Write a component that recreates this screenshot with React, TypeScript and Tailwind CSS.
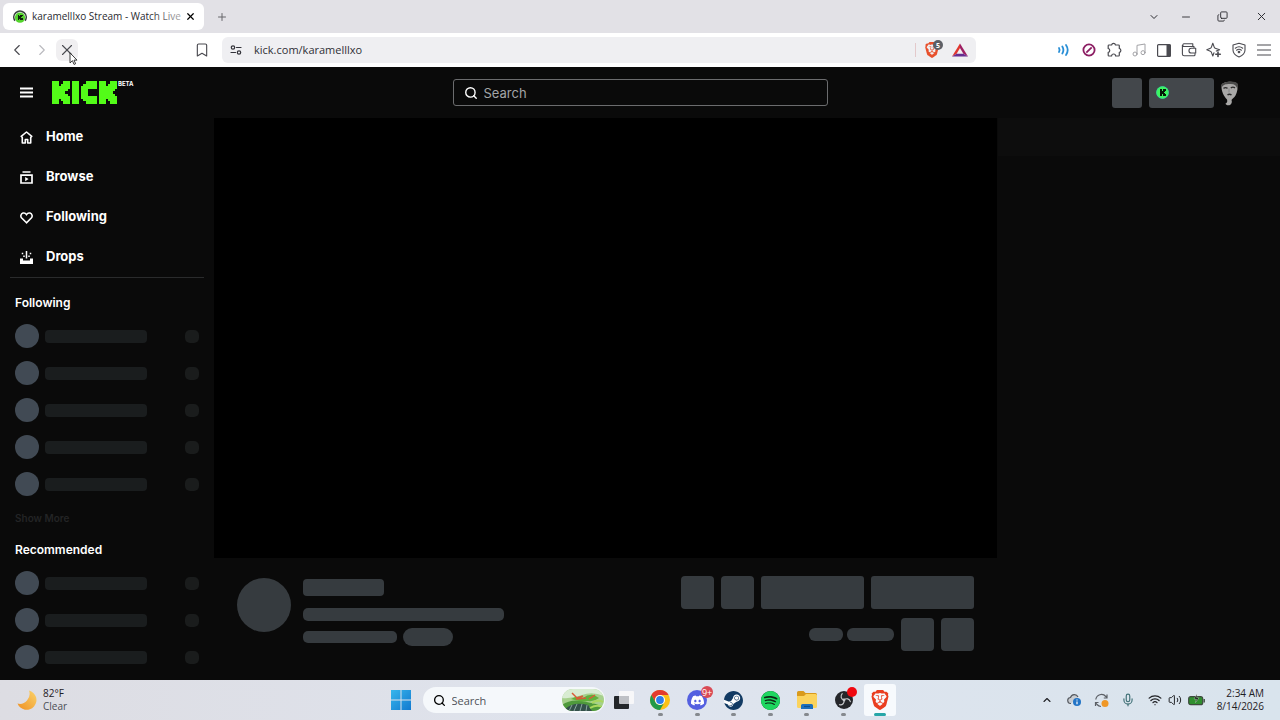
import type { ReactNode } from "react";
import {
  Bookmark,
  ChevronDown,
  ChevronLeft,
  ChevronRight,
  ChevronUp,
  Copy,
  Mic,
  Minus,
  Music,
  Plus,
  Search,
  Volume2,
  Wifi,
  X,
} from "lucide-react";
import { SiBrave, SiDiscord, SiSpotify, SiSteam } from "react-icons/si";

const SYSTEM_FONT = "font-['Open_Sans','Noto_Sans',sans-serif]";

type Block = [x: number, y: number, w: number, h: number];

const K_BLOCKS: Block[] = [
  [0, 0, 3, 9],
  [3, 2, 1, 5],
  [4, 1, 1, 7],
  [5, 0, 1, 3],
  [5, 3, 1, 3],
  [5, 6, 1, 3],
  [6, 0, 1, 4],
  [6, 5, 1, 4],
  [7, 0, 1, 3],
  [7, 6, 1, 3],
];
const I_BLOCKS: Block[] = [[0, 0, 3, 9]];
const C_BLOCKS: Block[] = [
  [0, 2, 1, 5],
  [1, 1, 1, 7],
  [2, 0, 1, 9],
  [3, 0, 4, 3],
  [3, 6, 4, 3],
];

function Blocks({ blocks, x = 0 }: { blocks: Block[]; x?: number }) {
  return (
    <g transform={`translate(${x} 0)`} shapeRendering="crispEdges">
      {blocks.map(([bx, by, w, h], i) => (
        <rect key={i} x={bx} y={by} width={w} height={h} />
      ))}
    </g>
  );
}

function KickLogo() {
  return (
    <svg viewBox="0 0 29 9" preserveAspectRatio="none" className="h-[23px] w-[65px] fill-[#53fc18]" aria-hidden="true">
      <Blocks blocks={K_BLOCKS} />
      <Blocks blocks={I_BLOCKS} x={9} />
      <Blocks blocks={C_BLOCKS} x={13} />
      <Blocks blocks={K_BLOCKS} x={21} />
    </svg>
  );
}

function Favicon() {
  return (
    <svg viewBox="0 0 26 26" className="size-[14px] shrink-0" aria-hidden="true">
      <circle cx="13" cy="14" r="9.5" fill="#53d42c" />
      <path d="M3.5 20A11.5 11.5 0 1 1 22.500 20" fill="none" stroke="#3b4440" strokeWidth="3" />
      <g transform="translate(8.500 8.500) scale(1.15)" fill="#10240d">
        <Blocks blocks={K_BLOCKS} />
      </g>
    </svg>
  );
}

/* ---------- Browser window ---------- */

function TabStrip() {
  return (
    <div className="flex h-[33px] shrink-0 items-center justify-between bg-[#e2e1e6] pl-[3px]">
      <div className="flex items-center">
        <div className="flex h-[27px] w-[201px] items-center rounded-md bg-white pr-2 pl-2.5">
          <Favicon />
          <span className="relative ml-[5px] text-[10px] whitespace-nowrap text-[#2a2a30]">
            karamelllxo Stream - Watch Live
            <span className="absolute inset-y-0 right-0 w-8 bg-linear-to-r from-transparent to-white/60" />
          </span>
          <button type="button" aria-label="Close tab" className="ml-auto">
            <X className="size-[11px] text-black" strokeWidth={2.6} />
          </button>
        </div>
        <button type="button" aria-label="New tab" className="ml-3">
          <Plus className="size-3 text-[#66666b]" strokeWidth={2} />
        </button>
      </div>
      <div className="flex items-center pr-3 text-[#2b2b30]">
        <button type="button" aria-label="Search tabs" className="mr-5">
          <ChevronDown className="size-3" strokeWidth={2} />
        </button>
        <button type="button" aria-label="Minimize" className="mr-[25px]">
          <Minus className="size-3" strokeWidth={1.8} />
        </button>
        <button type="button" aria-label="Restore" className="mr-[27px]">
          <Copy className="size-[11px] -scale-y-100" strokeWidth={2} />
        </button>
        <button type="button" aria-label="Close window">
          <X className="size-[13px]" strokeWidth={1.8} />
        </button>
      </div>
    </div>
  );
}

function TuneIcon() {
  return (
    <svg viewBox="0 0 12 12" className="size-3 text-[#33333a]" fill="none" stroke="currentColor" strokeWidth="1.2" strokeLinecap="round" aria-hidden="true">
      <circle cx="3" cy="3.500" r="1.700" />
      <path d="M6.500 3.500H11" />
      <circle cx="9" cy="8.500" r="1.700" />
      <path d="M1 8.500h4.500" />
    </svg>
  );
}

function PuzzleIcon() {
  return (
    <svg viewBox="0 0 16 16" className="size-4" fill="none" stroke="currentColor" strokeWidth="1.200" strokeLinejoin="round" aria-hidden="true">
      <path d="M3 3h2.600a2 2 0 0 1 3.900 0h3a.8.8 0 0 1 .8.800v2.700a2 2 0 0 1 0 3.900v2.800a.8.8 0 0 1-.8.800H9.600a2 2 0 0 0-4 0H3a.8.8 0 0 1-.8-.8v-2.800a2 2 0 0 0 0-3.900V3.800A.8.8 0 0 1 3 3z" />
    </svg>
  );
}

function SparkIcon() {
  return (
    <svg viewBox="0 0 16 16" className="size-4" fill="none" stroke="currentColor" strokeWidth="1.1" strokeLinejoin="round" strokeLinecap="round" aria-hidden="true">
      <path d="M6.800 1.200 8.300 5.400a1.500 1.500 0 0 0 .9.900L13.600 7.800 10.300 9.100M6.800 1.200 5.300 5.400a1.500 1.500 0 0 1-.9.900L.8 7.800l3.600 1.400a1.500 1.500 0 0 1 .9.900L6.800 14l1.200-3.300" />
      <path d="M12 10v4.500M9.800 12.200h4.500" strokeWidth="1.600" />
    </svg>
  );
}

function VpnIcon() {
  return (
    <svg viewBox="0 0 16 16" className="size-4" fill="none" stroke="currentColor" strokeWidth="1.100" strokeLinecap="round" strokeLinejoin="round" aria-hidden="true">
      <path d="M8 1.200 14 3v5c0 3.300-2.800 5.600-6 7-3.200-1.400-6-3.700-6-7V3z" />
      <path d="M4.300 6.200c2.300-1.800 5.100-1.800 7.400 0M5.600 8.200c1.500-1.200 3.300-1.200 4.800 0" />
      <circle cx="8" cy="10" r=".8" fill="currentColor" />
    </svg>
  );
}

function WavesIcon() {
  return (
    <svg viewBox="0 0 14 14" className="size-3.5" fill="none" stroke="#2a8fd6" strokeWidth="1.800" strokeLinecap="round" aria-hidden="true">
      <path d="M2 5q1.200 2 0 4M5.300 3.500q2.200 3.500 0 7M9 2q3.400 5 0 10" />
    </svg>
  );
}

function BlockedIcon() {
  return (
    <svg viewBox="0 0 14 14" className="size-3.5" fill="none" stroke="#8c1d63" strokeWidth="1.800" aria-hidden="true">
      <circle cx="7" cy="7" r="5.600" />
      <path d="M4.300 9.700l5.400-5.400" />
    </svg>
  );
}

function BatIcon() {
  return (
    <svg viewBox="0 0 16 14" className="h-[14px] w-4" aria-hidden="true">
      <path d="M8 .5 0 13.500 4.600 10.800 8 5z" fill="#e0362f" />
      <path d="M8 .5 16 13.500 11.400 10.800 8 5z" fill="#9e1f63" />
      <path d="M0 13.500h16l-4.600-2.700H4.600z" fill="#662d91" />
    </svg>
  );
}

function Slot({ label, children }: { label: string; children: ReactNode }) {
  return (
    <button type="button" aria-label={label} className="flex w-[25px] items-center justify-center">
      {children}
    </button>
  );
}

function Toolbar() {
  return (
    <div className="flex h-[34px] shrink-0 items-center bg-white text-[#4a4a50]">
      <div className="flex w-[222px] shrink-0 items-center pr-3 pl-2">
        <button type="button" aria-label="Back">
          <ChevronLeft className="size-[18px]" strokeWidth={1.5} />
        </button>
        <button type="button" aria-label="Forward" className="ml-[7px]">
          <ChevronRight className="size-[18px] text-[#b9b9be]" strokeWidth={1.500} />
        </button>
        <button type="button" aria-label="Stop loading" className="relative ml-[5px] flex size-[22px] items-center justify-center rounded-md bg-[#f0eff1]">
          <X className="size-[18px]" strokeWidth={1.500} />
          <svg viewBox="0 0 10 16" className="absolute top-[13px] left-[13px] h-[14px] w-[9px]" aria-hidden="true">
            <path d="M1 1v11.500l2.800-2.600 1.800 4.300 1.800-.8-1.800-4.100H9z" fill="#fff" stroke="#222" strokeWidth="1" />
          </svg>
        </button>
        <button type="button" aria-label="Bookmark this page" className="ml-auto">
          <Bookmark className="size-4" strokeWidth={1.700} />
        </button>
      </div>
      <div className="flex h-[26px] min-w-0 flex-1 items-center rounded-md bg-[#efeff2] pr-2 pl-2">
        <TuneIcon />
        <input
          aria-label="Address"
          defaultValue="kick.com/karamelllxo"
          className="ml-3 min-w-0 flex-1 bg-transparent text-[11px] leading-4 text-[#2f2f36] outline-none"
        />
        <span className="h-[14px] w-px bg-[#e3c9cb]" />
        <button type="button" aria-label="Shields" className="relative ml-2">
          <SiBrave className="size-4 text-[#e8502c]" />
          <span className="absolute -top-[2px] -right-[3px] flex size-[10px] items-center justify-center rounded-full bg-[#5d6066] text-[7px] leading-none font-bold text-white">
            5
          </span>
        </button>
        <button type="button" aria-label="Rewards" className="ml-3">
          <BatIcon />
        </button>
      </div>
      <div className="flex w-[304px] shrink-0 justify-end pr-1">
        <Slot label="Audio"><WavesIcon /></Slot>
        <Slot label="Blocker"><BlockedIcon /></Slot>
        <Slot label="Extensions"><PuzzleIcon /></Slot>
        <Slot label="Media"><Music className="size-4 text-[#a2a2a6]" strokeWidth={1.500} /></Slot>
        <Slot label="Sidebar">
          <svg viewBox="0 0 14 13" className="h-[13px] w-[14px]" aria-hidden="true">
            <rect x=".6" y=".6" width="12.800" height="11.800" rx="1" fill="none" stroke="currentColor" strokeWidth="1.200" />
            <rect x="9.500" y=".6" width="4" height="11.800" fill="currentColor" />
          </svg>
        </Slot>
        <Slot label="Wallet">
          <svg viewBox="0 0 16 14" className="h-[14px] w-4" fill="none" stroke="currentColor" strokeWidth="1.100" strokeLinejoin="round" aria-hidden="true">
            <path d="M13 5V3.500H2.800a1.400 1.400 0 0 1 0-2.700h9v2.700M1.400 2v9a1.800 1.800 0 0 0 1.800 1.800H13a1 1 0 0 0 1-1v-1.600" />
            <path d="M14.700 5.300v4.700h-4.400a2.300 2.300 0 0 1 0-4.700z" />
          </svg>
        </Slot>
        <Slot label="Assistant"><SparkIcon /></Slot>
        <Slot label="VPN"><VpnIcon /></Slot>
        <Slot label="Menu">
          <svg viewBox="0 0 14 12" className="h-3 w-[14px]" stroke="currentColor" strokeWidth="1.200" aria-hidden="true">
            <path d="M0 1h14M0 6h14M0 11h14" />
          </svg>
        </Slot>
      </div>
    </div>
  );
}

/* ---------- Site ---------- */

function Portrait() {
  return (
    <svg viewBox="0 0 26 26" className="size-[26px]" aria-hidden="true">
      <path d="M3.500 5C5 1.500 17 .5 19 4c1.300 3.500.3 8-1.500 11.500-1.300 2-3 3.300-4 4.500.8 1.500.3 4-1.500 5-2 .8-4.300 0-4.500-1.500 1.500-.5 2.200-2 1.500-4C6 16.500 3 11 3.500 5z" fill="#a9a8a7" />
      <path d="M3 6C3.500 1 18 0 20 4l-.5 5C18.500 5.500 16 3.500 11.500 4 7.500 4 5 4.500 3.500 8z" fill="#4c4c4b" />
      <path d="M5.500 8.300q2-1.300 4 0M12.800 7.800q2.200-1.300 4.200 0M9.500 14.800q1.800-1.200 4 0" stroke="#2c2c2c" strokeWidth="1.400" fill="none" />
      <path d="M11 8.500v4" stroke="#868686" />
    </svg>
  );
}

function SiteHeader() {
  return (
    <header className="grid h-[50px] shrink-0 grid-cols-[1fr_auto_1fr] items-center pt-px">
      <div className="flex items-center pl-5">
        <button type="button" aria-label="Toggle sidebar">
          <svg viewBox="0 0 13 11" className="h-[11px] w-[13px]" stroke="#fff" strokeWidth="2" aria-hidden="true">
            <path d="M0 1.500h13M0 5.500h13M0 9.500h13" />
          </svg>
        </button>
        <a href="#home" aria-label="Kick beta" className="ml-[19px] flex items-start">
          <KickLogo />
          <span className="ml-px text-[6px] leading-[6px] font-bold text-white">BETA</span>
        </a>
      </div>
      <label className="flex h-[27px] w-[375px] max-w-full items-center rounded-[3px] border border-[#6b6c6e] px-2.5">
        <Search className="size-[14px] text-white" strokeWidth={2.400} />
        <input
          type="search"
          aria-label="Search"
          placeholder="Search"
          className="ml-1.5 min-w-0 flex-1 bg-transparent text-[13px] leading-5 text-white outline-none placeholder:text-[#a3a5a7]"
        />
      </label>
      <div className="flex items-center justify-end pr-9">
        <div className="size-[30px] rounded-[3px] bg-[#43474b]" />
        <div className="ml-[7px] flex h-[30px] w-[65px] items-center rounded-[3px] bg-[#43474b] pl-[7px]">
          <svg viewBox="0 0 26 26" className="size-[13px]" aria-hidden="true">
            <circle cx="13" cy="13" r="12" fill="#3df55f" stroke="#35e6a0" strokeWidth="1.500" />
            <g transform="translate(7.500 6.500) scale(1.450)" fill="#061a08">
              <Blocks blocks={K_BLOCKS} />
            </g>
          </svg>
        </div>
        <div className="ml-1">
          <Portrait />
        </div>
      </div>
    </header>
  );
}

const NAV: { label: string; icon: ReactNode }[] = [
  {
    label: "Home",
    icon: (
      <path d="M6.500 1 1.200 5.300 2.300 6.500V12h3V8.500h2.400V12h3V6.500L11.800 5.300z" fill="none" stroke="#fff" strokeWidth="1.600" strokeLinejoin="round" />
    ),
  },
  {
    label: "Browse",
    icon: (
      <>
        <path d="M2.500 1h8" stroke="#fff" strokeWidth="1.500" />
        <path d="M1 4.200h11v7.800H1z" fill="none" stroke="#fff" strokeWidth="1.700" />
        <path d="M5.200 5.900v4.400l3.400-2.200z" fill="#fff" />
      </>
    ),
  },
  {
    label: "Following",
    icon: (
      <path d="M6.500 11.800 1.500 6.800C.3 5.300.8 2.700 3 2.100c1.400-.4 2.700.3 3.500 1.500.8-1.200 2.100-1.900 3.500-1.500 2.200.6 2.700 3.200 1.500 4.700z" fill="none" stroke="#fff" strokeWidth="1.600" />
    ),
  },
  {
    label: "Drops",
    icon: (
      <>
        <path d="M0 7.500h3v2h7v-2h3v5.500H0z" fill="#fff" />
        <path d="M6.500 0v7.500M2.500 1.800v1.500M4 4.500v1.500M10.500 1.800v1.500M9 4.500v1.500" stroke="#fff" strokeWidth="1.500" />
      </>
    ),
  },
];

function ChannelPlaceholders({ count }: { count: number }) {
  return (
    <ul className="flex flex-col gap-[13px]">
      {Array.from({ length: count }, (_, i) => (
        <li key={i} className="flex h-6 items-center">
          <span className="size-6 rounded-full bg-[#414a54]" />
          <span className="ml-1.5 h-[13px] w-[102px] rounded-[4px] bg-[#1a1d1e]" />
          <span className="ml-auto h-[13px] w-[14px] rounded-[5px] bg-[#1a1c1c]" />
        </li>
      ))}
    </ul>
  );
}

function Sidebar() {
  return (
    <aside className="w-[214px] shrink-0">
      <nav className="mx-2.5 border-b border-[#2a2b2c]">
        {NAV.map((item) => (
          <a key={item.label} href={`#${item.label.toLowerCase()}`} className="flex h-10 items-center pl-2.5 text-[13px] font-bold text-white">
            <svg viewBox="0 0 13 13" className="mr-[13px] size-[13px]" aria-hidden="true">
              {item.icon}
            </svg>
            {item.label}
          </a>
        ))}
      </nav>
      <section className="px-[15px] pt-4">
        <h2 className="mb-3 text-[12px] leading-[18px] font-semibold text-white">Following</h2>
        <ChannelPlaceholders count={5} />
        <button type="button" disabled className="mt-4 block text-[10px] leading-3 font-semibold text-[#232425]">
          Show More
        </button>
      </section>
      <section className="px-[15px] pt-[17px]">
        <h2 className="mb-3 text-[12px] leading-[18px] font-semibold text-white">Recommended</h2>
        <ChannelPlaceholders count={3} />
      </section>
    </aside>
  );
}

function StreamInfo() {
  return (
    <div className="flex justify-between px-[23px] pt-[18px] pb-7">
      <div className="flex pt-0.5">
        <div className="size-[54px] rounded-full bg-[#363b3f]" />
        <div className="ml-3 pt-px">
          <div className="h-[17px] w-[81px] rounded-[4px] bg-[#363b3f]" />
          <div className="mt-3 h-[13px] w-[201px] rounded-[5px] bg-[#363b3f]" />
          <div className="mt-[7px] flex items-center gap-1.5">
            <div className="h-[12px] w-[94px] rounded-[5px] bg-[#363b3f]" />
            <div className="h-[18px] w-[50px] rounded-full bg-[#363b3f]" />
          </div>
        </div>
      </div>
      <div className="flex flex-col items-end gap-[9px]">
        <div className="flex gap-[7px]">
          <div className="size-[33px] rounded-[4px] bg-[#363b3f]" />
          <div className="size-[33px] rounded-[4px] bg-[#363b3f]" />
          <div className="h-[33px] w-[103px] rounded-[3px] bg-[#363b3f]" />
          <div className="h-[33px] w-[103px] rounded-[3px] bg-[#363b3f]" />
        </div>
        <div className="flex items-center">
          <div className="h-[13px] w-[34px] rounded-[6px] bg-[#363b3f]" />
          <div className="ml-1 h-[13px] w-[47px] rounded-[6px] bg-[#363b3f]" />
          <div className="ml-[7px] size-[33px] rounded-[4px] bg-[#363b3f]" />
          <div className="ml-[7px] size-[33px] rounded-[4px] bg-[#363b3f]" />
        </div>
      </div>
    </div>
  );
}

/* ---------- Desktop taskbar ---------- */

function WindowsIcon() {
  return (
    <svg viewBox="0 0 20 20" className="size-5" aria-hidden="true">
      <defs>
        <linearGradient id="win" x1="0" y1="0" x2="1" y2="1" gradientUnits="objectBoundingBox">
          <stop offset="0" stopColor="#37b6ec" />
          <stop offset="1" stopColor="#1279cf" />
        </linearGradient>
      </defs>
      <path d="M0 0h9.500v9.500H0zM10.500 0H20v9.500h-9.500zM0 10.500h9.500V20H0zM10.500 10.500H20V20h-9.500z" fill="url(#win)" />
    </svg>
  );
}

function ChameleonArt() {
  return (
    <svg viewBox="0 0 42 22" className="h-[22px] w-[42px] rounded-full" aria-hidden="true">
      <rect width="42" height="22" fill="#a6d08c" />
      <path d="M0 0h42v7Q30 2 20 6T0 9z" fill="#d8ecd2" />
      <path d="M0 16Q8 10 20 12T42 18v4H0z" fill="#4f9a3c" />
      <path d="M3 20Q12 12 26 16l4 6H3z" fill="#33504a" />
      <path d="M10 16l-3 6M15 15l-3 7M20 15l-2 7M25 16l-1 6" stroke="#8aa7a0" strokeWidth="1" />
      <path d="M9 10Q16 6 21 9q5-4 11-3l5 3q-5 4-11 3-6 1-9 0z" fill="#61b13c" />
      <path d="M10 4l5 5 6-2M14 10l10-1M33 6l-6 4" stroke="#d95b37" strokeWidth="1.500" fill="none" />
      <path d="M30 14Q36 10 41 13M28 19q7-4 12-1" stroke="#a9d75e" strokeWidth="2" fill="none" />
    </svg>
  );
}

function TaskViewIcon() {
  return (
    <svg viewBox="0 0 20 18" className="h-[18px] w-5" aria-hidden="true">
      <rect x="5" y="0" width="15" height="13" rx="1" fill="#f7f7f9" />
      <rect x="0" y="5" width="15" height="13" rx="1" fill="#23262a" />
      <path d="M5 5h10v8H6a1 1 0 0 1-1-1z" fill="#bfc1c6" />
    </svg>
  );
}

function ChromeIcon() {
  return (
    <svg viewBox="0 0 20 20" className="size-5" aria-hidden="true">
      <circle cx="10" cy="10" r="10" fill="#fbc116" />
      <path d="M1.340 5A10 10 0 0 1 18.660 5H10a5 5 0 0 0-4.330 7.500z" fill="#e33b2e" />
      <path d="M1.340 5A10 10 0 0 0 10 20l4.330-7.500a5 5 0 0 1-8.660 0z" fill="#229a48" />
      <circle cx="10" cy="10" r="5" fill="#fff" />
      <circle cx="10" cy="10" r="3.900" fill="#2f7de9" />
    </svg>
  );
}

function FolderIcon() {
  return (
    <svg viewBox="0 0 20 18" className="h-[18px] w-5" aria-hidden="true">
      <path d="M0 1.500A1.500 1.500 0 0 1 1.500 0h5l2 2H18.500A1.500 1.500 0 0 1 20 3.500V6H0z" fill="#d99a1c" />
      <path d="M0 5h7l2-2h9.500A1.500 1.500 0 0 1 20 4.500v11a1.500 1.500 0 0 1-1.500 1.500h-17A1.500 1.500 0 0 1 0 15.500z" fill="#fbd35d" />
      <path d="M4 18v-3.500A1.500 1.500 0 0 1 5.500 13h9a1.500 1.500 0 0 1 1.500 1.500V18z" fill="#1d6fbd" />
      <path d="M7 15.500h6" stroke="#0f4f8c" strokeWidth="1.200" />
    </svg>
  );
}

function ObsIcon() {
  return (
    <svg viewBox="0 0 20 20" className="size-[18px]" fill="none" aria-hidden="true">
      <circle cx="10" cy="10" r="10" fill="#25262a" />
      <g stroke="#c9cbce" strokeWidth="1.300" strokeLinecap="round">
        {[0, 120, 240].map((angle) => (
          <path key={angle} d="M10 10C6.500 9 5.800 5.500 8 3" transform={`rotate(${angle} 10 10)`} />
        ))}
      </g>
      <circle cx="10" cy="10" r="1.600" fill="#c9cbce" />
    </svg>
  );
}

function TaskApp({ label, active = false, running = true, children }: { label: string; active?: boolean; running?: boolean; children: ReactNode }) {
  return (
    <button type="button" aria-label={label} className="flex justify-center">
      <span className={active ? "relative flex size-8 items-center justify-center rounded-[3px] bg-[#f7fafd]" : "relative flex size-8 items-center justify-center"}>
        {children}
        {running && (
          <span className={active ? "absolute bottom-0 h-[3px] w-3 rounded-full bg-[#27a6a8]" : "absolute bottom-0 h-[3px] w-[5px] rounded-full bg-[#85898e]"} />
        )}
      </span>
    </button>
  );
}

function Taskbar() {
  return (
    <footer className="grid h-10 shrink-0 grid-cols-[1fr_auto_1fr] items-center bg-linear-to-r from-[#dddde3] via-[#dfe4ee] to-[#d9e4ed] text-[10px] leading-[13px] text-[#1f2024]">
      <button type="button" className="flex items-center pl-[17px] text-left">
        <svg viewBox="0 0 20 20" className="size-5" aria-hidden="true">
          <defs>
            <linearGradient id="moon" x1="1" y1="0" x2="0" y2="1">
              <stop offset="0" stopColor="#fbd36a" />
              <stop offset="1" stopColor="#ee9023" />
            </linearGradient>
          </defs>
          <path d="M12 .5A9.800 9.800 0 1 1 .5 13.500Q6 15 10 10.500T12 .5z" fill="url(#moon)" />
        </svg>
        <span className="ml-1.5">
          <span className="block">82°F</span>
          <span className="block text-[#4b4e54]">Clear</span>
        </span>
      </button>
      <div className="flex items-center pl-[9px]">
        <button type="button" aria-label="Start">
          <WindowsIcon />
        </button>
        <label className="ml-3 flex h-[26px] w-[182px] items-center rounded-full bg-[#f5f8fb] pr-px pl-2.5">
          <Search className="size-[13px] text-black" strokeWidth={2.400} />
          <input
            type="search"
            aria-label="Search the computer"
            placeholder="Search"
            className="ml-1.5 min-w-0 flex-1 bg-transparent text-[11px] outline-none placeholder:text-[#4e5258]"
          />
          <ChameleonArt />
        </label>
        <div className="ml-px grid w-[293px] grid-cols-8">
          <TaskApp label="Task view" running={false}><TaskViewIcon /></TaskApp>
          <TaskApp label="Chrome"><ChromeIcon /></TaskApp>
          <TaskApp label="Discord">
            <span className="flex size-5 items-center justify-center rounded-full bg-[#5460e0]">
              <SiDiscord className="size-[13px] text-white" />
            </span>
            <span className="absolute top-[2px] right-0 flex size-3 items-center justify-center rounded-full bg-[#d94a55] text-[9px] leading-none text-white">
              9+
            </span>
          </TaskApp>
          <TaskApp label="Steam">
            <span className="flex size-[19px] items-center justify-center rounded-full bg-white">
              <SiSteam className="size-[19px] text-[#123a63]" />
            </span>
          </TaskApp>
          <TaskApp label="Spotify">
            <span className="flex size-[19px] items-center justify-center rounded-full bg-[#0c2a16]">
              <SiSpotify className="size-[19px] text-[#1ed760]" />
            </span>
          </TaskApp>
          <TaskApp label="File Explorer"><FolderIcon /></TaskApp>
          <TaskApp label="OBS Studio">
            <ObsIcon />
            <span className="absolute top-[3px] right-[3px] size-[10px] rounded-full bg-[#f0080f]" />
          </TaskApp>
          <TaskApp label="Brave" active>
            <SiBrave className="size-5 text-[#ea3e20]" />
          </TaskApp>
        </div>
      </div>
      <div className="flex items-center justify-end pr-4">
        <button type="button" aria-label="Show hidden icons" className="mr-[14px]">
          <ChevronUp className="size-3" strokeWidth={2.200} />
        </button>
        <svg viewBox="0 0 15 14" className="mr-3 h-[14px] w-[15px]" aria-label="OneDrive">
          <path d="M4 10.500a3 3 0 0 1-.5-6 4 4 0 0 1 7.500-.5" fill="#c8ccd1" stroke="#55595f" strokeWidth="1.200" />
          <circle cx="10" cy="9" r="4" fill="#2374c6" />
          <path d="M10 8.500v2.800M10 6.500v1" stroke="#fff" strokeWidth="1.200" />
        </svg>
        <svg viewBox="0 0 15 15" className="mr-3 size-[15px]" fill="none" aria-label="Updates">
          <path d="M1.800 6.500a5.700 5.700 0 0 1 10-3L13 5M13 1.500V5H9.800M1.500 9.500l1.500 2A5.500 5.500 0 0 0 7 13.500M1.500 13V9.500H4.500" stroke="#5c6066" strokeWidth="1.200" />
          <circle cx="11" cy="10.500" r="3.500" fill="#ef9726" />
        </svg>
        <Mic className="mr-[13px] size-[14px] text-[#417177]" strokeWidth={2} />
        <Wifi className="mr-1.5 size-[14px]" strokeWidth={2.200} />
        <Volume2 className="mr-1.5 size-[14px]" strokeWidth={1.700} />
        <svg viewBox="0 0 17 12" className="h-3 w-[17px]" aria-label="Battery charging">
          <rect x=".7" y="2.700" width="14" height="8" rx="2" fill="#2f8f2e" stroke="#3d4a3e" strokeWidth="1.200" />
          <path d="M16.200 5v3.500" stroke="#3d4a3e" strokeWidth="1.400" />
          <path d="M9 0 6 5h2.500L7.500 8.500 11 3.800H8.700z" fill="#111" stroke="#dce9dc" strokeWidth=".4" />
        </svg>
        <span className="ml-3 text-right whitespace-nowrap">
          <span className="block">2:34 AM</span>
          <span className="block">8/14/2026</span>
        </span>
      </div>
    </footer>
  );
}

export default function App() {
  return (
    <div className={`flex min-h-screen flex-col ${SYSTEM_FONT}`}>
      <TabStrip />
      <Toolbar />
      <div className="flex flex-1 flex-col bg-[#0a0a0a] font-['Inter',sans-serif]">
        <SiteHeader />
        <div className="flex flex-1">
          <Sidebar />
          <main className="min-w-0 flex-1 pt-px">
            <div className="aspect-video bg-black" />
            <StreamInfo />
          </main>
          <aside aria-label="Chat" className="w-[283px] shrink-0 pt-px pl-px">
            <div className="h-[38px] bg-[#0d0d0d]" />
          </aside>
        </div>
      </div>
      <Taskbar />
    </div>
  );
}
